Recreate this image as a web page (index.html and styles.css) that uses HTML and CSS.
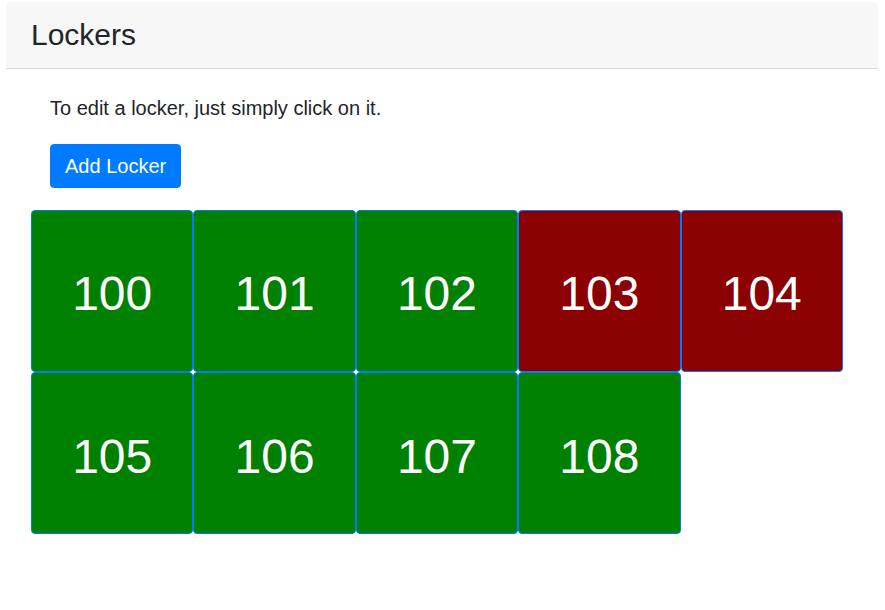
FILE: index.html
```html
<!DOCTYPE html>
<html>
<head>
<meta charset="utf-8">
<title>Lockers</title>
<link rel="stylesheet" href="styles.css">
</head>
<body>
<div class="card">
  <div class="card-header">Lockers</div>
  <div class="card-body">
    <div class="intro">
      <p class="lead">To edit a locker, just simply click on it.</p>
      <button class="btn">Add Locker</button>
    </div>
    <div class="lockers">
      <div class="locker free">100</div>
      <div class="locker free">101</div>
      <div class="locker free">102</div>
      <div class="locker taken">103</div>
      <div class="locker taken">104</div>
      <div class="locker free">105</div>
      <div class="locker free">106</div>
      <div class="locker free">107</div>
      <div class="locker free">108</div>
    </div>
  </div>
</div>
</body>
</html>
```
FILE: styles.css
```css
html, body {
  margin: 0;
  padding: 0;
  background: #fff;
}
body {
  font-family: "Liberation Sans", Arial, sans-serif;
  color: #212529;
}
.card {
  margin: 2px 7px 0 6px;
  border-radius: 4px 4px 0 0;
}
.card-header {
  height: 66px;
  display: flex;
  align-items: center;
  padding: 0 25px;
  background: #f7f7f7;
  border-bottom: 1px solid #dcdcdc;
  border-radius: 4px 4px 0 0;
  font-size: 30px;
  color: #212529;
}
.card-body {
  padding: 24px 25px 0 25px;
}
.intro {
  padding-left: 19px;
}
.lead {
  margin: 0 0 21px 0;
  font-size: 20px;
  line-height: 30px;
}
.btn {
  font-family: "Liberation Sans", Arial, sans-serif;
  font-size: 20px;
  line-height: 30px;
  padding: 6px 14px;
  border: 1px solid #007bff;
  background: #007bff;
  color: #fff;
  border-radius: 4px;
  cursor: pointer;
}
.lockers {
  margin-top: 21.6px;
  display: grid;
  grid-template-columns: repeat(5, 162.4px);
}
.locker {
  box-sizing: border-box;
  height: 162.4px;
  border: 1px solid #007bff;
  border-radius: 4px;
  display: flex;
  align-items: center;
  justify-content: center;
  color: #fff;
  font-size: 48px;
  padding-top: 6px;
}
.free {
  background: #008000;
}
.taken {
  background: #8b0000;
}
```
